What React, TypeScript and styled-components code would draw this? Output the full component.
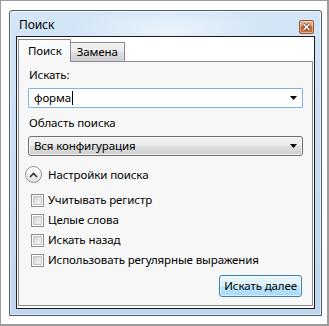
import React from "react";
import styled, { createGlobalStyle } from "styled-components";

const Global = createGlobalStyle`
  html, body { margin: 0; padding: 0; background: #fff; }
  body { font-family: "Noto Sans", "Open Sans", sans-serif; font-size: 11.5px; letter-spacing: -0.1px; color: #000; }
  * { box-sizing: border-box; }
`;

const Screen = styled.div`
  width: 329px;
  height: 326px;
  border: 2px solid #9c9c9c;
  border-top-width: 1px;
  border-left-width: 1px;
  background: #fff;
  padding: 9px 5px 8px 8px;
  display: flex;
`;

const Window = styled.div`
  flex: 1;
  display: flex;
  flex-direction: column;
  border: 1px solid #4e5b68;
  border-radius: 3px 3px 0 0;
  background:
    radial-gradient(ellipse 140px 40px at 160px 20px, rgba(255,255,255,0.55), rgba(255,255,255,0) 70%),
    linear-gradient(180deg, #d4e6f7 0%, #c9def3 40%, #bfd6ee 100%);
  box-shadow: inset 0 0 0 1px rgba(255, 255, 255, 0.55);
  padding: 0 6px 6px 6px;
`;

const TitleBar = styled.div`
  height: 25px;
  display: flex;
  align-items: flex-end;
  justify-content: space-between;
  padding: 0 1px 2px 3px;
`;

const Title = styled.span`
  font-size: 12px;
  line-height: 16px;
  padding-bottom: 1px;
`;

const CloseButton = styled.span`
  width: 15px;
  height: 14px;
  border: 1px solid #8a5a3e;
  border-radius: 2px;
  background: linear-gradient(180deg, #e9c09a 0%, #d99a6c 35%, #c65a22 55%, #d4783c 100%);
  box-shadow: inset 0 0 0 1px rgba(255, 225, 195, 0.55);
  display: flex;
  align-items: center;
  justify-content: center;
`;

const Client = styled.div`
  flex: 1;
  display: flex;
  flex-direction: column;
  border: 1px solid #1c1c1c;
  background: #fff;
  padding: 2px 1px 2px 1px;
`;

const TabStrip = styled.div`
  display: flex;
  align-items: flex-end;
  position: relative;
  z-index: 1;
  margin-bottom: -1px;
`;

const Tab = styled.div<{ $active?: boolean }>`
  height: ${(p) => (p.$active ? "23px" : "20px")};
  padding: ${(p) => (p.$active ? "0 8px 0 9px" : "0 6px 0 6px")};
  border: 1px solid #898c95;
  border-left-width: ${(p) => (p.$active ? "1px" : "0")};
  border-bottom-color: ${(p) => (p.$active ? "transparent" : "#898c95")};
  background: ${(p) =>
    p.$active
      ? "linear-gradient(180deg, #fcfcfc, #f7f7f7)"
      : "linear-gradient(180deg, #f2f2f2 0%, #ebebeb 50%, #dddddd 51%, #cfcfcf 100%)"};
  display: flex;
  align-items: center;
  line-height: 16px;
  padding-bottom: ${(p) => (p.$active ? "0" : "1px")};
`;

const Panel = styled.div`
  flex: 1;
  border: 1px solid #898c95;
  background: #f7f7f7;
  display: flex;
  flex-direction: column;
  padding: 5px 9px 7px 9px;
`;

const Label = styled.div<{ $top?: number }>`
  line-height: 16px;
  margin-top: ${(p) => p.$top ?? 0}px;
  padding-left: 1px;
`;

const Combo = styled.div<{ $editable?: boolean }>`
  height: 20px;
  margin-top: 5px;
  display: flex;
  align-items: center;
  justify-content: space-between;
  padding: 0 5px 0 5px;
  border: 1px solid ${(p) => (p.$editable ? "#7fb2e3" : "#707070")};
  border-radius: ${(p) => (p.$editable ? "1px" : "3px")};
  background: ${(p) =>
    p.$editable
      ? "#fff"
      : "linear-gradient(180deg, #f2f2f2 0%, #ebebeb 50%, #dddddd 51%, #cfcfcf 100%)"};
  box-shadow: ${(p) => (p.$editable ? "none" : "inset 0 0 0 1px rgba(255,255,255,0.7)")};
  line-height: 16px;
`;

const ComboText = styled.span`
  display: flex;
  align-items: center;
`;

const Caret = styled.span`
  display: inline-block;
  width: 1px;
  height: 14px;
  background: #000;
  margin-left: 1px;
`;

const Expander = styled.div`
  display: flex;
  align-items: center;
  gap: 6px;
  margin-top: 10px;
  margin-left: -3px;
  line-height: 16px;
`;

const ExpanderCircle = styled.span`
  width: 17px;
  height: 17px;
  border-radius: 50%;
  border: 1px solid #8d9094;
  background: linear-gradient(180deg, #ffffff 0%, #f1f1f1 50%, #e2e2e2 100%);
  display: flex;
  align-items: center;
  justify-content: center;
`;

const Options = styled.div`
  display: flex;
  flex-direction: column;
  margin-top: 7px;
`;

const OptionRow = styled.label`
  height: 20px;
  display: flex;
  align-items: center;
  gap: 4px;
  padding-left: 3px;
  line-height: 16px;
`;

const CheckBox = styled.span`
  width: 13px;
  height: 13px;
  border: 1px solid #8e8f8f;
  background: #fff;
  padding: 1px;
  display: flex;
  &::after {
    content: "";
    flex: 1;
    border: 1px solid #c3c6cb;
    background: linear-gradient(135deg, #d0d3d8 0%, #e8e9eb 60%, #f6f6f6 100%);
  }
`;

const Footer = styled.div`
  display: flex;
  justify-content: flex-end;
  margin-top: 5px;
`;

const Button = styled.button`
  height: 22px;
  padding: 0 4px 1px 4px;
  border: 1px solid #3c7fb1;
  border-radius: 3px;
  background: linear-gradient(180deg, #eaf6fd 0%, #d9f0fc 50%, #bee6fd 51%, #a7d9f5 100%);
  box-shadow: inset 0 0 0 1px rgba(255, 255, 255, 0.6);
  font-family: inherit;
  font-size: 11.5px;
  letter-spacing: -0.1px;
  color: #000;
  line-height: 16px;
  margin-right: 1px;
`;

const Arrow = () => (
  <svg width="7" height="4" viewBox="0 0 7 4">
    <path d="M0 0H7L3.5 4Z" fill="#000" />
  </svg>
);

const options = [
  "Учитывать регистр",
  "Целые слова",
  "Искать назад",
  "Использовать регулярные выражения",
];

export default function App() {
  return (
    <>
      <Global />
      <Screen>
        <Window>
          <TitleBar>
            <Title>Поиск</Title>
            <CloseButton>
              <svg width="9" height="8" viewBox="0 0 9 8">
                <path d="M1.5 1L7.5 7M7.5 1L1.5 7" stroke="#5a4032" strokeWidth="3" />
                <path d="M1.5 1L7.5 7M7.5 1L1.5 7" stroke="#fff" strokeWidth="1.6" />
              </svg>
            </CloseButton>
          </TitleBar>
          <Client>
            <TabStrip>
              <Tab $active>Поиск</Tab>
              <Tab>Замена</Tab>
            </TabStrip>
            <Panel>
              <Label>Искать:</Label>
              <Combo $editable>
                <ComboText>
                  форма
                  <Caret />
                </ComboText>
                <Arrow />
              </Combo>
              <Label $top={7}>Область поиска</Label>
              <Combo>
                <ComboText>Вся конфигурация</ComboText>
                <Arrow />
              </Combo>
              <Expander>
                <ExpanderCircle>
                  <svg width="9" height="6" viewBox="0 0 9 6">
                    <path d="M1 5L4.5 1.5L8 5" fill="none" stroke="#303030" strokeWidth="1.6" />
                  </svg>
                </ExpanderCircle>
                Настройки поиска
              </Expander>
              <Options>
                {options.map((o) => (
                  <OptionRow key={o}>
                    <CheckBox />
                    {o}
                  </OptionRow>
                ))}
              </Options>
              <Footer>
                <Button>Искать далее</Button>
              </Footer>
            </Panel>
          </Client>
        </Window>
      </Screen>
    </>
  );
}
